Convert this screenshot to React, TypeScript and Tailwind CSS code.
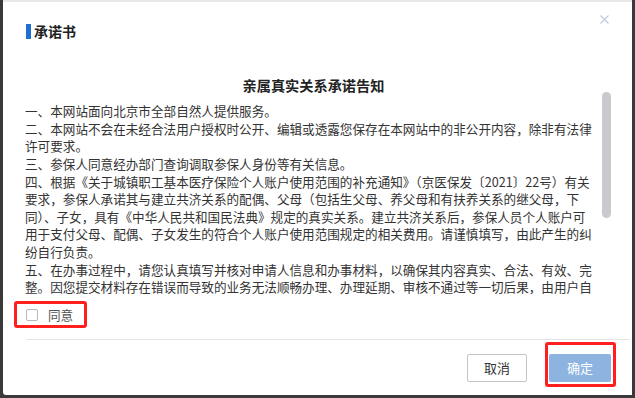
import { useState } from 'react'

const LINES = [
  '一、本网站面向北京市全部自然人提供服务。',
  '二、本网站不会在未经合法用户授权时公开、编辑或透露您保存在本网站中的非公开内容，除非有法律',
  '许可要求。',
  '三、参保人同意经办部门查询调取参保人身份等有关信息。',
  '四、根据《关于城镇职工基本医疗保险个人账户使用范围的补充通知》（京医保发〔2021〕22号）有关',
  '要求，参保人承诺其与建立共济关系的配偶、父母（包括生父母、养父母和有扶养关系的继父母，下',
  '同）、子女，具有《中华人民共和国民法典》规定的真实关系。建立共济关系后，参保人员个人账户可',
  '用于支付父母、配偶、子女发生的符合个人账户使用范围规定的相关费用。请谨慎填写，由此产生的纠',
  '纷自行负责。',
  '五、在办事过程中，请您认真填写并核对申请人信息和办事材料，以确保其内容真实、合法、有效、完',
  '整。因您提交材料存在错误而导致的业务无法顺畅办理、办理延期、审核不通过等一切后果，由用户自',
]

export default function App() {
  const [agree, setAgree] = useState(false)

  return (
    <div
      className="w-[635px] h-[398px] bg-[#3a3a3a] overflow-hidden"
      style={{ fontFamily: '"Microsoft YaHei", "Noto Sans CJK SC", "Noto Sans", sans-serif' }}
    >
      <div className="relative ml-[3px] w-[629px] h-[395px] bg-white border-t-2 border-[#e8e8e8] rounded-bl-[3px] flex flex-col">
        {/* 标题 */}
        <div className="h-[73px] pt-[22px] pl-[23px] shrink-0">
          <div className="flex items-center h-[15px]">
            <span className="w-[5px] h-[15px] bg-[#1f6fd1]" />
            <span className="ml-[3px] text-[14px] leading-[15px] font-bold text-[#222]">承诺书</span>
          </div>
        </div>

        <button className="absolute top-[13px] right-[23px] w-[9px] h-[9px] text-[#bfcbe0]">
          <svg viewBox="0 0 9 9" width="9" height="9" fill="none" stroke="currentColor" strokeWidth="1.2">
            <path d="M0.5 0.5 L8.5 8.5 M8.5 0.5 L0.5 8.5" />
          </svg>
        </button>

        {/* 内容 */}
        <div className="h-[223px] shrink-0 flex pl-[22px] pr-[21px]">
          <div className="flex-1 overflow-hidden">
            <div className="text-center text-[14.2px] leading-[20px] font-bold text-[#222]">
              亲属真实关系承诺告知
            </div>
            <div className="mt-[7px] text-[12.6px] leading-[17.64px] text-[#333]">
              {LINES.map((l, i) => (
                <div key={i} className="whitespace-nowrap">{l}</div>
              ))}
            </div>
          </div>
          <div className="mt-[17px] w-[9px] h-[126px] rounded-full bg-[#c9cacd] shrink-0" />
        </div>

        {/* 同意 */}
        <div className="mt-[3px] ml-[11px] w-[73px] h-[27px] border-[3px] border-[#ff1f1f] rounded-[3px] flex items-center pl-[9px] shrink-0">
          <button
            onClick={() => setAgree(!agree)}
            className={`w-[12px] h-[12px] border rounded-[2px] ${agree ? 'bg-[#1f6fd1] border-[#1f6fd1]' : 'bg-white border-[#b8b8b8]'}`}
          />
          <span className="ml-[10px] text-[12.6px] leading-[14px] text-[#555]">同意</span>
        </div>

        <div className="mt-[11px] ml-[23px] mr-[2px] h-px bg-[#e4e4e4] shrink-0" />

        {/* 按钮 */}
        <div className="mt-[2px] flex justify-end pr-[16px] shrink-0">
          <button className="mt-[12px] w-[60px] h-[28px] border border-[#c4c4c4] rounded-[2px] bg-white text-[13px] text-[#333]">
            取消
          </button>
          <div className="ml-[18px] w-[71px] h-[45px] border-[3px] border-[#ff1f1f] rounded-[3px] pt-[9px] pl-px">
            <button
              disabled={!agree}
              className="w-[62px] h-[28px] rounded-[2px] bg-[#8db3e0] text-[13px] text-white"
            >
              确定
            </button>
          </div>
        </div>
      </div>
    </div>
  )
}
